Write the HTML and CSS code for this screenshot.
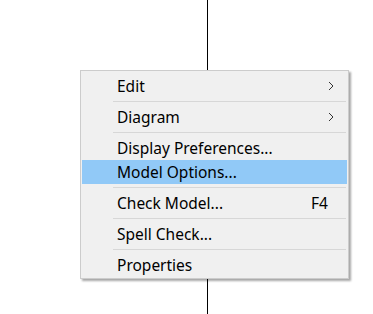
FILE: index.html
```html
<!DOCTYPE html>
<html lang="en">
  <head>
    <meta charset="UTF-8" />
    <title>Context Menu</title>
    <link rel="stylesheet" href="styles.css">
  </head>
  <body>
    <div class="canvas">
      <div class="wire"></div>

      <div class="menu">
        <div class="item">
          <span class="label">Edit</span>
          <svg class="arrow" width="6" height="10" viewBox="0 0 6 10">
            <polyline points="1,1 5,5 1,9" fill="none" stroke="#333" stroke-width="1" />
          </svg>
        </div>
        <div class="sep"></div>
        <div class="item">
          <span class="label">Diagram</span>
          <svg class="arrow" width="6" height="10" viewBox="0 0 6 10">
            <polyline points="1,1 5,5 1,9" fill="none" stroke="#333" stroke-width="1" />
          </svg>
        </div>
        <div class="sep"></div>
        <div class="item">
          <span class="label">Display Preferences...</span>
        </div>
        <div class="item active">
          <span class="label">Model Options...</span>
        </div>
        <div class="sep"></div>
        <div class="item">
          <span class="label">Check Model...</span>
          <span class="key">F4</span>
        </div>
        <div class="sep"></div>
        <div class="item">
          <span class="label">Spell Check...</span>
        </div>
        <div class="sep"></div>
        <div class="item">
          <span class="label">Properties</span>
        </div>
      </div>
    </div>
  </body>
</html>
```

FILE: styles.css
```css
body {
  margin: 0;
  background-color: #ffffff;
  font-family: "Noto Sans", "Open Sans", sans-serif;
}

.canvas {
  position: relative;
  width: 373px;
  height: 314px;
}

.wire {
  margin-left: 207px;
  width: 1px;
  height: 314px;
  background-color: #000000;
}

.menu {
  position: absolute;
  left: 80px;
  top: 70px;
  width: 265px;
  padding: 3px 1px 1px 1px;
  background-color: #f0f0f0;
  border: 1px solid #cccccc;
  box-shadow: 2px 2px 2px rgba(0, 0, 0, 0.35);
}

.item {
  display: flex;
  align-items: center;
  height: 24px;
  padding-left: 35px;
  padding-right: 13px;
  font-size: 15.5px;
  color: #000000;
}

.item.active {
  background-color: #91c9f7;
}

.label {
  flex: 1;
}

.key {
  margin-right: 6px;
}

.arrow {
  display: block;
}

.sep {
  height: 1px;
  margin: 3px 1px 3px 31px;
  background-color: #d7d7d7;
}
```
